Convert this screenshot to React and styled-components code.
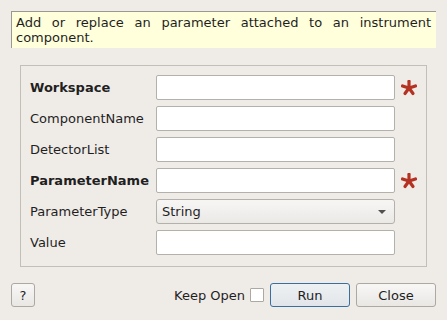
import React from 'react';
import styled, { createGlobalStyle } from 'styled-components';

const GlobalStyle = createGlobalStyle`
  body {
    margin: 0;
    background: #efebe7;
    font-family: "DejaVu Sans", "Liberation Sans", sans-serif;
    font-size: 13px;
    color: #1f1f1f;
  }
`;

const Dialog = styled.div`
  width: 447px;
  height: 320px;
  box-sizing: border-box;
  padding: 11px;
  display: flex;
  flex-direction: column;
  background: #efebe7;
`;

const InfoBox = styled.div`
  background: #ffffdc;
  border-left: 1px solid #9a9892;
  border-top: 1px solid #9a9892;
  padding: 3px 5px 3px 4px;
  line-height: 15px;
  text-align: justify;
  height: 30px;
`;

const GroupBox = styled.div`
  margin: 17px 9px 0 9px;
  border: 1px solid #c2beb8;
  padding: 9px 9px 11px 9px;
  display: grid;
  grid-template-columns: 120px 239px 16px;
  column-gap: 6px;
  row-gap: 6px;
  align-items: center;
`;

const Label = styled.div`
  font-weight: ${(p) => (p.required ? 'bold' : 'normal')};
  white-space: nowrap;
`;

const Input = styled.div`
  height: 25px;
  box-sizing: border-box;
  background: #ffffff;
  border: 1px solid #b4b0aa;
  border-radius: 2px;
`;

const Combo = styled.div`
  height: 25px;
  box-sizing: border-box;
  background: linear-gradient(#f7f6f5, #ebe9e6);
  border: 1px solid #b4b0aa;
  border-radius: 3px;
  display: flex;
  align-items: center;
  justify-content: space-between;
  padding: 0 8px 0 5px;
`;

const Arrow = styled.span`
  width: 0;
  height: 0;
  border-left: 4px solid transparent;
  border-right: 4px solid transparent;
  border-top: 4px solid #505050;
`;

const Star = styled.svg`
  width: 16px;
  height: 16px;
  display: block;
`;

const Footer = styled.div`
  margin-top: 16px;
  display: flex;
  align-items: center;
`;

const Button = styled.button`
  height: 24px;
  width: ${(p) => p.width || 80}px;
  box-sizing: border-box;
  font-family: inherit;
  font-size: 13px;
  color: #1f1f1f;
  padding: 0;
  border-radius: 3px;
  border: 1px solid ${(p) => (p.primary ? '#3a6e9f' : '#aca8a2')};
  background: ${(p) =>
    p.primary
      ? 'linear-gradient(#eef1f4, #e1e5e9)'
      : 'linear-gradient(#f8f7f6, #e9e7e4)'};
  margin-left: ${(p) => p.gap || 0}px;
`;

const Spacer = styled.div`
  flex: 1;
`;

const CheckLabel = styled.span`
  margin-right: 5px;
`;

const CheckBox = styled.span`
  width: 14px;
  height: 14px;
  box-sizing: border-box;
  border: 1px solid #aca8a2;
  background: #ffffff;
  border-radius: 1px;
  margin-right: 6px;
`;

const Asterisk = () => (
  <Star viewBox="0 0 16 16">
    {[0, 72, 144, 216, 288].map((a) => (
      <line
        key={a}
        x1="8"
        y1="8"
        x2="8"
        y2="1.2"
        stroke="#b43222"
        strokeWidth="3.2"
        strokeLinecap="round"
        transform={`rotate(${a} 8 8)`}
      />
    ))}
  </Star>
);

const fields = [
  { name: 'Workspace', required: true },
  { name: 'ComponentName' },
  { name: 'DetectorList' },
  { name: 'ParameterName', required: true },
  { name: 'ParameterType', combo: 'String' },
  { name: 'Value' },
];

const App = () => (
  <>
    <GlobalStyle />
    <Dialog>
      <InfoBox>
        Add or replace an parameter attached to an instrument component.
      </InfoBox>
      <GroupBox>
        {fields.map((f) => (
          <React.Fragment key={f.name}>
            <Label required={f.required}>{f.name}</Label>
            {f.combo ? (
              <Combo>
                {f.combo}
                <Arrow />
              </Combo>
            ) : (
              <Input />
            )}
            <div>{f.required && <Asterisk />}</div>
          </React.Fragment>
        ))}
      </GroupBox>
      <Footer>
        <Button width={24}>?</Button>
        <Spacer />
        <CheckLabel>Keep Open</CheckLabel>
        <CheckBox />
        <Button primary>Run</Button>
        <Button gap={6}>Close</Button>
      </Footer>
    </Dialog>
  </>
);

export default App;
